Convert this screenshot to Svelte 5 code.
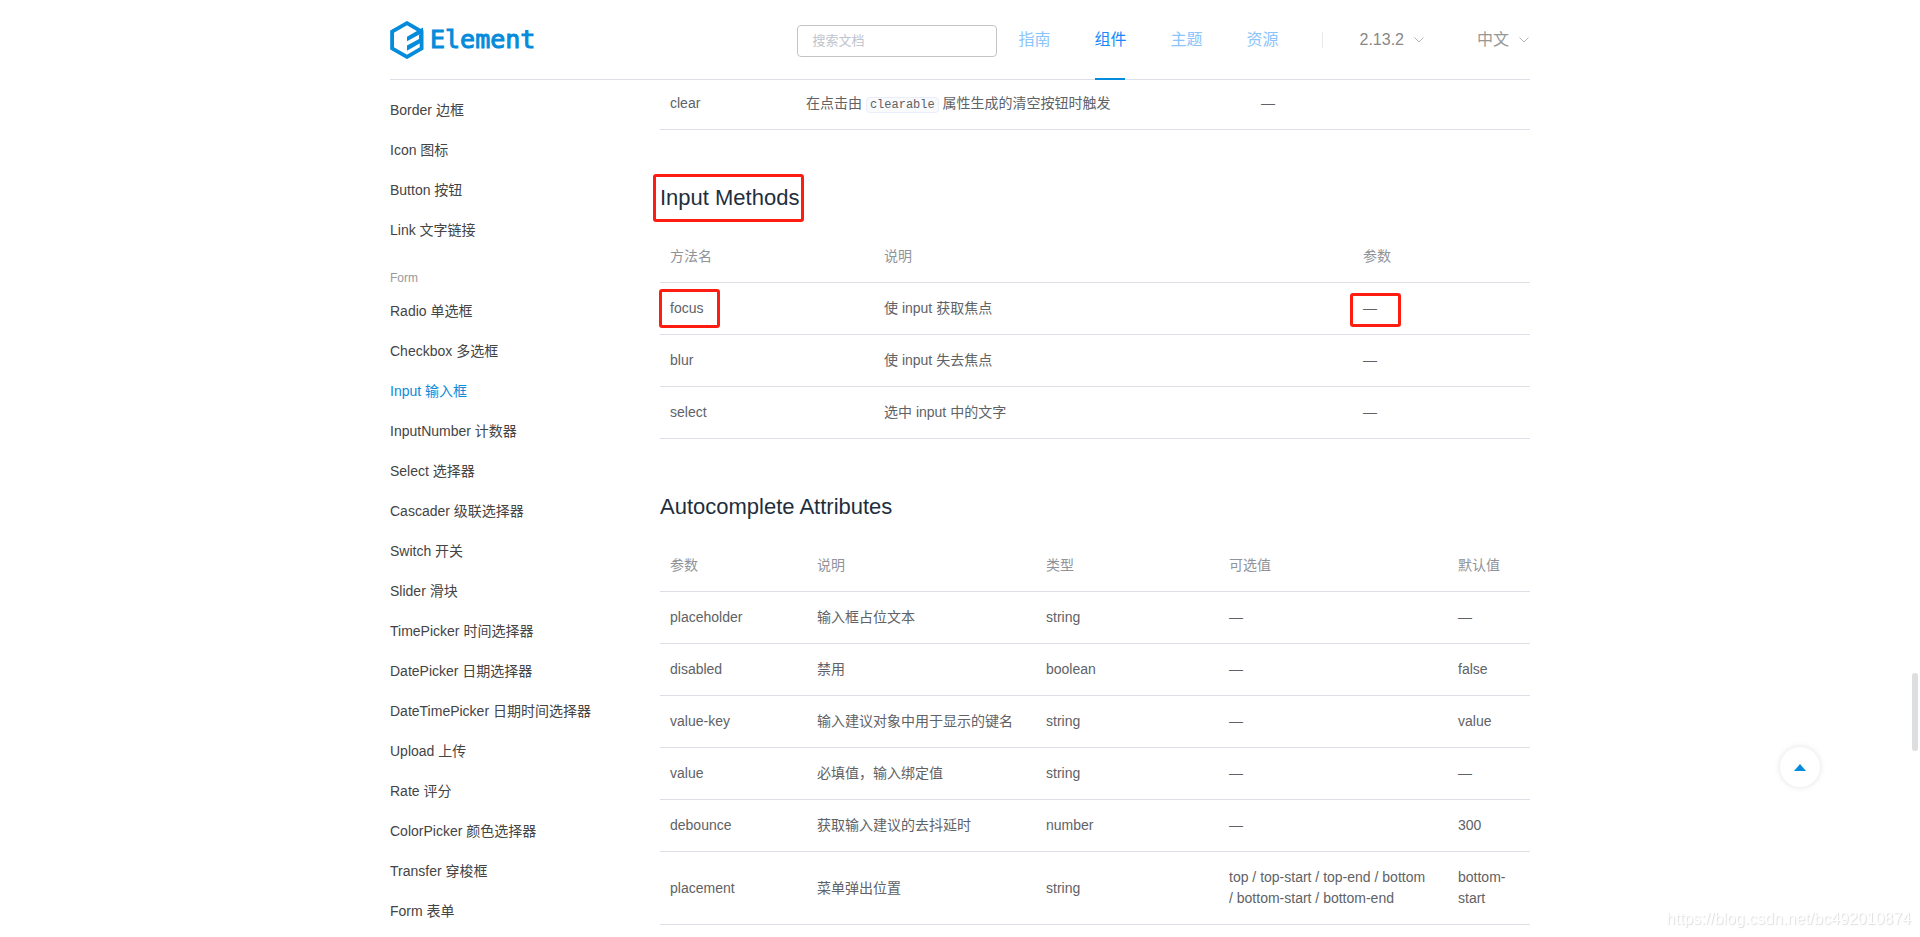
<script>
  const navItems = [
    { label: '指南' },
    { label: '组件', active: true },
    { label: '主题' },
    { label: '资源' }
  ];

  const groups = [
    { items: ['Border 边框', 'Icon 图标', 'Button 按钮', 'Link 文字链接'] },
    {
      title: 'Form',
      items: [
        'Radio 单选框', 'Checkbox 多选框', 'Input 输入框', 'InputNumber 计数器',
        'Select 选择器', 'Cascader 级联选择器', 'Switch 开关', 'Slider 滑块',
        'TimePicker 时间选择器', 'DatePicker 日期选择器', 'DateTimePicker 日期时间选择器',
        'Upload 上传', 'Rate 评分', 'ColorPicker 颜色选择器', 'Transfer 穿梭框', 'Form 表单'
      ]
    }
  ];
  const current = 'Input 输入框';

  const methods = [
    { name: 'focus', desc: '使 input 获取焦点', marked: true },
    { name: 'blur', desc: '使 input 失去焦点' },
    { name: 'select', desc: '选中 input 中的文字' }
  ];

  const attributes = [
    ['placeholder', '输入框占位文本', 'string', '—', '—'],
    ['disabled', '禁用', 'boolean', '—', 'false'],
    ['value-key', '输入建议对象中用于显示的键名', 'string', '—', 'value'],
    ['value', '必填值，输入绑定值', 'string', '—', '—'],
    ['debounce', '获取输入建议的去抖延时', 'number', '—', '300'],
    ['placement', '菜单弹出位置', 'string', 'top / top-start / top-end / bottom /\u00a0bottom-start / bottom-end', 'bottom-start']
  ];
</script>

{#snippet chevron()}
  <svg class="chevron" viewBox="0 0 12 12" aria-hidden="true"><path d="M1.5 3.500 6 8l4.500-4.500" /></svg>
{/snippet}

<div class="page">
  <header class="header">
    <a class="logo" href="#home">
      <svg class="mark" viewBox="0 0 34 38" aria-hidden="true">
        <path class="hex" d="M17 2.100 31.600 10.500V27.500L17 35.900 2.100 27.500V10.500Z" />
        <path class="bar" d="M17 15.700 33 6.500V11.500L17 20.300Z" />
        <path class="bar" d="M17 24.600 29 17.900V14L33 12V20.500L17 29.700Z" />
      </svg>
      <span class="wordmark">Element</span>
    </a>
    <input class="search" type="search" placeholder="搜索文档" aria-label="搜索文档" />
    <nav class="nav">
      {#each navItems as item}
        <a href="#nav" class:active={item.active}>{item.label}</a>
      {/each}
    </nav>
    <span class="divider"></span>
    <button class="picker version" type="button">2.13.2 {@render chevron()}</button>
    <button class="picker" type="button">中文 {@render chevron()}</button>
  </header>

  <div class="body">
    <aside class="side">
      {#each groups as group}
        {#if group.title}<div class="group-title">{group.title}</div>{/if}
        <ul>
          {#each group.items as item}
            <li><a href="#component" class:active={item === current}>{item}</a></li>
          {/each}
        </ul>
      {/each}
    </aside>

    <main class="content">
      <table class="events">
        <colgroup><col class="w136" /><col /><col class="w279" /></colgroup>
        <tbody>
          <tr><td>clear</td><td>在点击由 <code>clearable</code> 属性生成的清空按钮时触发</td><td>—</td></tr>
        </tbody>
      </table>

      <h3><span class="mark-box title-mark">Input Methods</span></h3>
      <table>
        <colgroup><col class="w214" /><col /><col class="w177" /></colgroup>
        <thead><tr><th>方法名</th><th>说明</th><th>参数</th></tr></thead>
        <tbody>
          {#each methods as row}
            <tr>
              <td><span class:mark-box={row.marked} class:name-mark={row.marked}>{row.name}</span></td>
              <td>{row.desc}</td>
              <td><span class:mark-box={row.marked} class:param-mark={row.marked}>—</span></td>
            </tr>
          {/each}
        </tbody>
      </table>

      <h3>Autocomplete Attributes</h3>
      <table>
        <colgroup><col class="w147" /><col /><col class="w183" /><col class="w229" /><col class="w82" /></colgroup>
        <thead><tr><th>参数</th><th>说明</th><th>类型</th><th>可选值</th><th>默认值</th></tr></thead>
        <tbody>
          {#each attributes as row}
            <tr>{#each row as cell}<td>{cell}</td>{/each}</tr>
          {/each}
        </tbody>
      </table>
    </main>
  </div>

  <button class="backtop" type="button" aria-label="回到顶部">
    <svg viewBox="0 0 12 7" aria-hidden="true"><path d="M6 0 12 7H0Z" /></svg>
  </button>
  <div class="thumb"></div>
  <div class="watermark">https://blog.csdn.net/bc492010874</div>
</div>

<style>
  :global(body) {
    margin: 0;
    background: #fff;
  }

  .page {
    max-width: 1140px;
    margin: 0 auto;
    color: #606266;
    font: 14px/21px "Liberation Sans", "Noto Sans CJK SC", sans-serif;
  }

  a {
    color: inherit;
    text-decoration: none;
  }

  .header {
    position: relative;
    z-index: 1;
    display: flex;
    align-items: center;
    box-sizing: border-box;
    height: 80px;
    border-bottom: 1px solid #dcdfe6;
    background: #fff;
  }

  .logo {
    display: flex;
    align-items: center;
    gap: 6px;
    margin-right: auto;
    color: #058bdb;
  }

  .mark {
    width: 34px;
    height: 38px;
  }

  .hex {
    fill: none;
    stroke: currentColor;
    stroke-width: 3.800;
  }

  .bar {
    fill: currentColor;
  }

  .wordmark {
    font: 25px/38px "DejaVu Sans Mono", monospace;
    -webkit-text-stroke: 1px currentColor;
  }

  .search {
    box-sizing: border-box;
    width: 200px;
    height: 32px;
    margin-top: 2px;
    padding: 0 14px;
    border: 1px solid #c4c4c4;
    border-radius: 4px;
    background: #fff;
    color: #606266;
    font: 13px "Liberation Sans", "Noto Sans CJK SC", sans-serif;
    appearance: none;
    outline: none;
  }

  .search::placeholder {
    color: #c0c4cc;
  }

  .nav {
    display: flex;
    gap: 44px;
    margin-left: 21px;
    font-size: 16px;
    line-height: 80px;
  }

  .nav a {
    position: relative;
    color: #8cc4fc;
  }

  .nav a.active {
    color: #1989fa;
  }

  .nav a.active::after {
    content: "";
    position: absolute;
    left: 1px;
    right: 1px;
    bottom: 0;
    height: 2px;
    background: #058bdb;
  }

  .divider {
    width: 1px;
    height: 16px;
    margin: 0 37px 0 43px;
    background: #ebebeb;
  }

  .picker {
    display: flex;
    align-items: center;
    gap: 9px;
    padding: 0;
    border: 0;
    background: none;
    color: #979797;
    font: 16px/24px "Liberation Sans", "Noto Sans CJK SC", sans-serif;
  }

  .version {
    margin-right: 52px;
    color: #888;
  }

  .chevron {
    width: 12px;
    height: 12px;
    fill: none;
    stroke: #b4b4b4;
    stroke-width: 1;
  }

  .body {
    display: flex;
  }

  .side {
    flex: 0 0 270px;
    padding-top: 10px;
    color: #444;
    line-height: 40px;
  }

  .side ul {
    margin: 0;
    padding: 0;
    list-style: none;
  }

  .side a {
    display: block;
  }

  .side a.active {
    color: #0d8ad8;
  }

  .group-title {
    margin-top: 15px;
    color: #999;
    font-size: 12px;
    line-height: 26px;
  }

  .content {
    flex: 1;
    min-width: 0;
  }

  table {
    width: 100%;
    table-layout: fixed;
    border-collapse: separate;
    border-spacing: 0;
  }

  .events {
    margin-top: -2px;
  }

  th,
  td {
    padding: 15px 10px;
    border-bottom: 1px solid #dcdfe6;
    text-align: left;
    font-weight: 400;
  }

  th {
    color: #909399;
  }

  .w82 { width: 82px; }
  .w136 { width: 136px; }
  .w147 { width: 147px; }
  .w177 { width: 177px; }
  .w183 { width: 183px; }
  .w214 { width: 214px; }
  .w229 { width: 229px; }
  .w279 { width: 279px; }

  code {
    padding: 0 3px;
    border: 1px solid #eaeefb;
    border-radius: 4px;
    background: #f9fafc;
    font: 12px "Liberation Mono", monospace;
  }

  h3 {
    margin: 55px 0 20px;
    color: #1f2f3d;
    font-size: 22px;
    font-weight: 400;
    line-height: 26px;
  }

  .mark-box {
    position: relative;
  }

  h3 .mark-box,
  td .mark-box {
    display: inline-block;
    vertical-align: top;
  }

  .mark-box::after {
    content: "";
    position: absolute;
    border: 3px solid #ff1c10;
    border-radius: 3px;
  }

  .title-mark::after {
    inset: -11px -5px -11px -7px;
  }

  .name-mark::after {
    inset: -9px -17px -9px -11px;
  }

  .param-mark::after {
    inset: -5px -24px -8px -13px;
  }

  .backtop {
    position: fixed;
    right: 100px;
    bottom: 150px;
    display: flex;
    align-items: center;
    justify-content: center;
    width: 40px;
    height: 40px;
    padding: 0;
    border: 0;
    border-radius: 50%;
    background: #fff;
    box-shadow: 0 0 6px rgba(0, 0, 0, 0.12);
  }

  .backtop svg {
    width: 12px;
    height: 7px;
    fill: #058bdb;
  }

  .thumb {
    position: fixed;
    right: 2px;
    top: 673px;
    width: 6px;
    height: 78px;
    border-radius: 3px;
    background: #dddee0;
  }

  .watermark {
    position: fixed;
    right: 9px;
    bottom: 7px;
    color: #fff;
    font-size: 16px;
    line-height: 22px;
    text-shadow: 1px 1px 1px #ddd;
  }
</style>
